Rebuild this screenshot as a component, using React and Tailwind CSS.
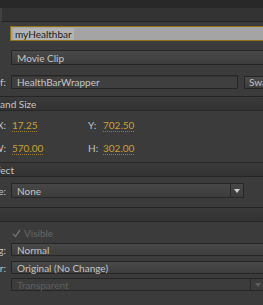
import React from "react";

// Flash-style Properties panel, clipped on the left
export default function App() {
    return (
        <div className="w-[263px] h-[305px] overflow-hidden bg-[#3b3b3b] font-['Lato',sans-serif] text-[10px] text-[#c4c4c4] leading-none select-none">
            <div className="h-[8px] bg-[#282828]" />
            <div className="h-[14px] bg-[#333333] border-b border-[#232323] border-l-2 border-l-[#424242]" />

            {/* instance name */}
            <div className="flex pl-[10px] mt-[4px]">
                <div className="flex-none w-[270px] h-[15px] border border-[#8f7116] bg-[#a4a4a4] flex items-center pl-[2px]">
                    <span className="bg-[#b3b3b3] text-[#1e1e1e] px-[2px] py-[1px]">myHealthbar</span>
                </div>
            </div>

            {/* symbol type */}
            <div className="flex pl-[11px] mt-[9px]">
                <Field className="w-[270px] h-[15px]">Movie Clip</Field>
            </div>

            {/* instance of */}
            <Row className="mt-[10px]" label="Instance of:">
                <div className="flex-none w-[227px] h-[14px] border border-[#262626] bg-[#3f3f3f] flex items-center pl-[5px] shadow-[inset_0_1px_0_#333]">
                    HealthBarWrapper
                </div>
                <div className="flex-none ml-[6px] w-[40px] h-[13px] border border-[#262626] bg-gradient-to-b from-[#4a4a4a] to-[#3c3c3c] flex items-center pl-[4px] whitespace-nowrap">
                    Swap...
                </div>
            </Row>

            <Header className="mt-[7px]" title="Position and Size" />
            <div className="h-[9px]" />
            <ValueRow a="X:" av="17.25" b="Y:" bv="702.50" />
            <div className="h-[13px]" />
            <ValueRow a="W:" av="570.00" b="H:" bv="302.00" />

            <Header className="mt-[9px]" title="Color Effect" />
            <Row className="mt-[6px]" label="Style:">
                <Dropdown className="w-[233px] h-[15px]" arrowAt={12}>None</Dropdown>
            </Row>

            <Header className="mt-[9px]" title="Display" />
            <div className="flex items-center pl-[12px] mt-[5px] h-[12px] text-[#666666]">
                <span className="w-[9px] h-[9px] flex items-center justify-center">
                    <svg width="9" height="9" viewBox="0 0 9 9">
                        <path d="M1 5 L3.5 7.5 L8 1" stroke="#6e6e6e" strokeWidth="1.4" fill="none" />
                    </svg>
                </span>
                <span className="ml-[3px]">Visible</span>
            </div>
            <Row className="mt-[4px]" label="Blending:">
                <Field className="w-[270px] h-[13px]">Normal</Field>
            </Row>
            <Row className="mt-[5px]" label="Render:">
                <Field className="w-[270px] h-[13px]">Original (No Change)</Field>
            </Row>
            <Row className="mt-[4px]" label="">
                <Dropdown disabled className="w-[255px] h-[13px]" arrowAt={14}>Transparent</Dropdown>
            </Row>
        </div>
    );
}

function Row({ label, className = "", children }) {
    return (
        <div className={`flex items-center ${className}`}>
            <span className="flex-none w-[6px] flex justify-end whitespace-nowrap">{label}</span>
            <div className="flex-none w-[5px]" />
            {children}
        </div>
    );
}

function Header({ title, className = "" }) {
    return (
        <div className={`h-[15px] bg-gradient-to-b from-[#3a3a3a] to-[#333333] border-t border-[#262626] border-b border-b-[#262626] flex items-center ${className}`}>
            <span className="flex-none -ml-[38px] whitespace-nowrap text-[#c4c4c4]">{title}</span>
        </div>
    );
}

function ValueRow({ a, av, b, bv }) {
    return (
        <div className="flex items-center h-[10px]">
            <span className="flex-none w-[6px] flex justify-end whitespace-nowrap">{a}</span>
            <span className="ml-[6px] w-[76px] text-[#c9a032] underline decoration-dotted decoration-[#9c7c26] underline-offset-[2px]">{av}</span>
            <span className="w-[15px]">{b}</span>
            <span className="text-[#c9a032] underline decoration-dotted decoration-[#9c7c26] underline-offset-[2px]">{bv}</span>
        </div>
    );
}

function Field({ className = "", children }) {
    return (
        <div className={`flex-none border border-[#262626] bg-gradient-to-b from-[#494949] to-[#3d3d3d] flex items-center pl-[5px] whitespace-nowrap ${className}`}>
            {children}
        </div>
    );
}

function Dropdown({ className = "", arrowAt, disabled, children }) {
    return (
        <div className={`flex-none border border-[#262626] flex items-stretch ${disabled ? "bg-[#3c3c3c] text-[#5e5e5e]" : "bg-gradient-to-b from-[#474747] to-[#3c3c3c]"} ${className}`}>
            <div className="flex-1 flex items-center pl-[5px] border-r border-[#2a2a2a]">{children}</div>
            <div className="flex-none flex items-center justify-center" style={{ width: arrowAt }}>
                <svg width="6" height="4" viewBox="0 0 6 4">
                    <path d="M0 0 H6 L3 4 Z" fill={disabled ? "#5e5e5e" : "#d0d0d0"} />
                </svg>
            </div>
        </div>
    );
}
